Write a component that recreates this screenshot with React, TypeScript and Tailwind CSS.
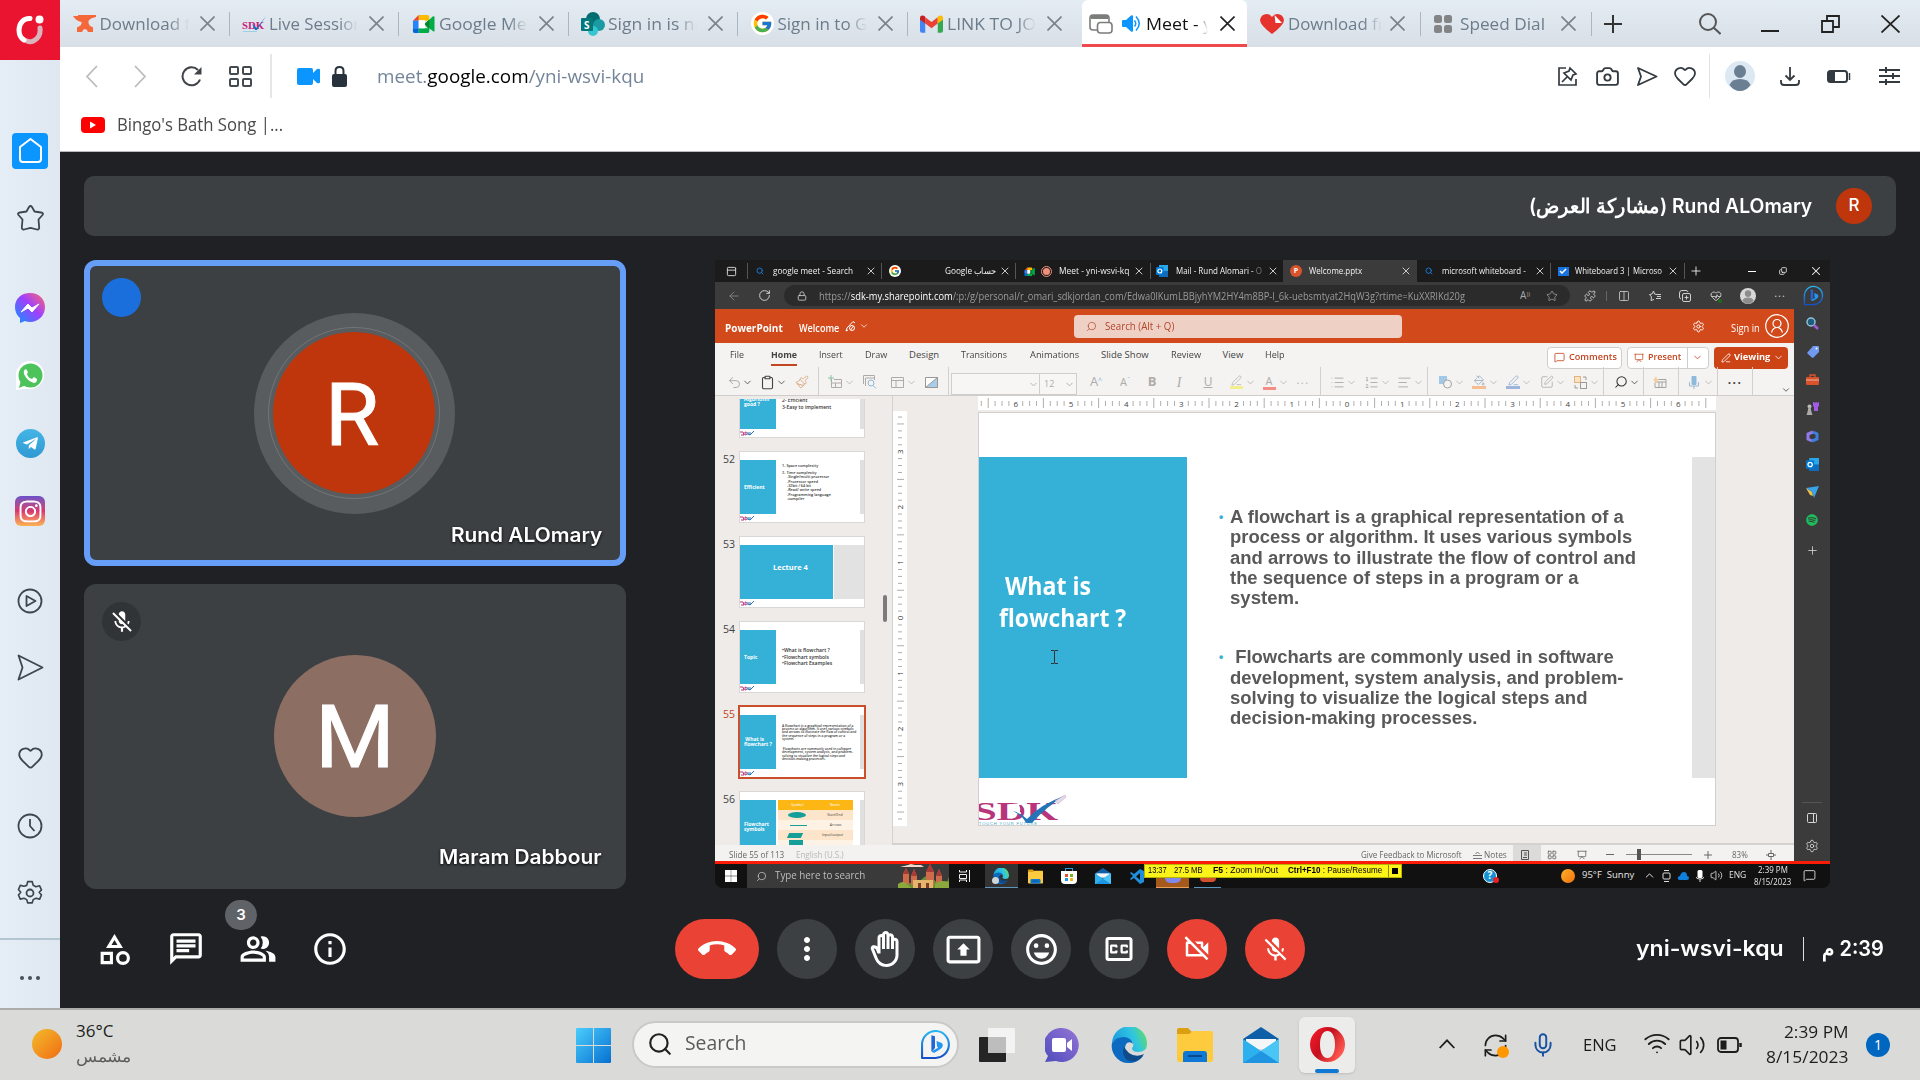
import React, { useLayoutEffect, useRef, useState } from "react";
import { ArrowLeft, Camera, ChevronDown, ChevronUp, Clipboard, Columns2, Copy, Heart, Lock, MessageSquare, Mic, Paintbrush, PanelRight, Plus, Presentation, Puzzle, RefreshCw, RotateCw, Search, Settings, Star, Undo2, Volume2, Wifi, X, PanelLeft, LayoutGrid, HeartPulse, PenLine, PaintBucket, SquarePen, List, ListOrdered, TextAlignStart } from "lucide-react";
import { MdCallEnd, MdMoreVert, MdOutlineBackHand, MdOutlinePresentToAll, MdOutlineEmojiEmotions, MdOutlineClosedCaption, MdOutlineVideocamOff, MdMicOff, MdOutlineCategory, MdOutlineChat, MdOutlinePeopleAlt, MdInfoOutline } from "react-icons/md";
import { FcGoogle } from "react-icons/fc";
import { FaTelegramPlane, FaInstagram, FaSpotify } from "react-icons/fa";

type Item = { at: number; node: React.ReactNode; start?: boolean };

/* Lays items along one axis; each one is centred on (or starts at) its stop. */
function Track({ items, vertical = false, className = "" }: { items: Item[]; vertical?: boolean; className?: string }) {
  let prev = 0;
  return (
    <div className={(vertical ? "flex flex-col items-center " : "flex items-center ") + className}>
      {items.map((it, i) => {
        const gap = it.at - prev;
        prev = it.at;
        const cls = vertical ? "flex h-0 shrink-0 items-center" : it.start ? "flex w-0 shrink-0 items-center justify-start" : "flex w-0 shrink-0 items-center justify-center";
        return (
          <div key={i} className={cls} style={vertical ? { marginTop: gap } : { marginLeft: gap }}>
            <div className="flex shrink-0 items-center">{it.node}</div>
          </div>
        );
      })}
    </div>
  );
}

/* Single line of text condensed or widened to a fixed measure. */
function Fit({ w, className = "", rtl = false, children }: { w: number; className?: string; rtl?: boolean; children: React.ReactNode }) {
  const ref = useRef<HTMLSpanElement>(null);
  const [k, setK] = useState(1);
  useLayoutEffect(() => {
    if (ref.current) setK(w / ref.current.offsetWidth);
  }, [w]);
  return (
    <span className="inline-block shrink-0 whitespace-nowrap text-left" style={{ width: w }}>
      <span ref={ref} dir={rtl ? "rtl" : "ltr"} className={"inline-block origin-left whitespace-pre " + className} style={{ transform: `scaleX(${k})` }}>
        {children}
      </span>
    </span>
  );
}

const c = (at: number, node: React.ReactNode): Item => ({ at, node });
const s = (at: number, node: React.ReactNode): Item => ({ at, node, start: true });

/* ---------- logos ---------- */
const MeetLogo = ({ size = 23 }: { size?: number }) => (
  <svg width={size} height={size} viewBox="0 0 24 24">
    <path d="M7 3h9q2 0 2 2v4H7z" fill="#ffba00" /><path d="M7 3v6H1z" fill="#ea4335" />
    <path d="M1 9h6v8H1z" fill="#2684fc" /><path d="M1 17h6v5H3q-2 0-2-2z" fill="#0066da" />
    <path d="M7 17h11v3q0 2-2 2H7z" fill="#00ac47" /><path d="M13 12.500 18 8l4-3.500q1.500-.5 1.500 1v14q0 1.500-1.500.5L18 17v2z" fill="#00ac47" />
    <path d="M13 12.500 18 8v9z" fill="#00832d" /><path d="M7 8.500h6.500v8.500H7z" fill="#fff" />
  </svg>
);
const GmailLogo = () => (
  <svg width="23" height="18" viewBox="0 0 24 18">
    <path d="M0 2v14q0 2 2 2h3.500V7z" fill="#4285f4" /><path d="M24 2v14q0 2-2 2h-3.500V7z" fill="#34a853" />
    <path d="M5.500 2 12 7l6.500-5v6.500L12 13.500 5.500 8.500z" fill="#ea4335" />
    <path d="M0 2.500Q0 0 2.500 0 4 0 5.500 1.500v7L0 4.500z" fill="#c5221f" /><path d="M24 2.500Q24 0 21.500 0 20 0 18.500 1.500v7l5.500-4z" fill="#fbbc04" />
  </svg>
);
const Anvil = () => (
  <svg width="23" height="17" viewBox="0 0 23 17"><path d="M0 1h5V0h18v2q-6 1-7.500 4-.5 2.500 1 4.500l3.500 2V17h-5q-1-3-3-3t-3 3H4v-4.500l3.500-2q1.500-2 1-3.500Q3 6 0 1z" fill="#f4683a" /></svg>
);
const SdkLogo = ({ big = false }: { big?: boolean }) =>
  big ? (
    <svg width="88" height="30" viewBox="0 0 88 30">
      <text x="-5" y="25" textLength="84" lengthAdjust="spacingAndGlyphs" className="fill-[#b8357b] font-['Liberation_Serif',serif] text-[25px] font-bold">SDK</text>
      <path d="M30 9h12v10H30z" fill="#fff" /><path d="M34 16q8 2 14 8Q62 9 85 1 67 12 53 28h-6q-3-7-13-12z" fill="#2375b8" />
      <path d="M42 10q4 3 2 9l-3-2q1-4-1-7z" fill="#b8357b" />
      <path d="M76 6 86 0l1 2-8 7z" fill="#e7d9e8" stroke="#b9a3c4" strokeWidth=".5" />
      <text x="0" y="29.500" textLength="58" className="fill-[#3aa3c9] font-['Liberation_Sans',sans-serif] text-[4px]">TOUCH YOUR FUTURE</text>
    </svg>
  ) : (
    <svg width="24" height="18" viewBox="0 0 24 18">
      <text x="0" y="14" textLength="22" lengthAdjust="spacingAndGlyphs" className="fill-[#c9207c] font-['Liberation_Serif',serif] text-[11px] font-bold">SDK</text>
      <path d="M10 9l5 4L24 1l-9 14h-2z" fill="#1c6fc4" /><path d="M1 16.500h14" stroke="#9bd0e6" />
    </svg>
  );
const SharePoint = () => (
  <svg width="24" height="24" viewBox="0 0 24 24"><circle cx="12" cy="7" r="7" fill="#036c70" /><circle cx="18" cy="13" r="6" fill="#1a9ba1" /><circle cx="12" cy="19" r="5" fill="#37c6d0" /><rect x="0" y="6" width="12" height="13" rx="1" fill="#03787c" /><text x="3" y="16.500" className="fill-white font-['Open_Sans',sans-serif] text-[10px] font-bold">S</text></svg>
);
const BingLogo = ({ size = 30 }: { size?: number }) => (
  <svg width={size} height={size} viewBox="0 0 30 30">
    <defs><linearGradient id="bg" x1="0" x2="0" y1="0" y2="1"><stop offset="0" stopColor="#27b5f2" /><stop offset="1" stopColor="#1450c8" /></linearGradient></defs>
    <path d="M2 28V14A13 13 0 1 1 15 28z" fill="none" stroke="url(#bg)" strokeWidth="2" strokeLinejoin="round" />
    <path d="M11 6l3.500 1v11.500l-3 3.500q-.5-.5-.5-1z" fill="#2463d8" /><path d="M16 11.500l4.500 1.800q2 1 1.500 3.200-.5 2-2.500 3L14 23q-2 0-2.500-1.500l6-3.300-1-1.200z" fill="#2196f3" />
  </svg>
);
const EdgeLogo = ({ size = 36 }: { size?: number }) => (
  <svg width={size} height={size} viewBox="0 0 36 36">
    <defs><linearGradient id="eg" x1="0" x2="1" y1="0.300" y2="0"><stop offset="0" stopColor="#1ca0e0" /><stop offset="0.550" stopColor="#31c6e0" /><stop offset="1" stopColor="#6be04a" /></linearGradient></defs>
    <path d="M1 16A17.500 17.500 0 0 1 36 17q0 8-9 8-6 0-6-4 2-2 1-5-2-5-9-5-8 0-12 5z" fill="url(#eg)" />
    <path d="M1 16q4-6 12-6 8 1 9 7-3-3-6-1-4 4 0 11 5 6 16 2-6 8-16 7A17 17 0 0 1 1 16z" fill="#0c6bc0" />
    <path d="M13 20q-3 7 3 13 8 4 15-3l2-3q-8 4-15-1-3-3-5-6z" fill="#114a8b" />
  </svg>
);
const FolderLogo = ({ size = 36 }: { size?: number }) => (
  <svg width={size} height={size} viewBox="0 0 36 34"><path d="M0 2q0-2 2-2h9l4 4v4H0z" fill="#dd9f12" /><path d="M0 6h12l4-3h18q2 0 2 2v27q0 2-2 2H2q-2 0-2-2z" fill="#fecb3e" /><path d="M6 34V26q0-3 3-3h18q3 0 3 3v8z" fill="#0f78d4" /><path d="M11 28h14" stroke="#0a4a8a" strokeWidth="2" /></svg>
);
const MailLogo = ({ size = 36 }: { size?: number }) => (
  <svg width={size} height={size} viewBox="0 0 36 36"><path d="M0 12 18 0l18 12v6H0z" fill="#0f5ea8" /><path d="M3 12h30v10H3z" fill="#f4f6f8" /><path d="M0 12l18 12L36 12v24H0z" fill="#2cb1ee" /><path d="M36 12 0 36h36z" fill="#49c5f6" /><path d="M18 24 36 36H0z" fill="#1f94e0" /></svg>
);
const WinLogo = ({ size = 35, color = "" }: { size?: number; color?: string }) => (
  <svg width={size} height={size} viewBox="0 0 35 35">
    <defs><linearGradient id="wg" x1="0" y1="0" x2="1" y2="1" gradientUnits="objectBoundingBox"><stop offset="0" stopColor="#4bcdfd" /><stop offset="1" stopColor="#0670d0" /></linearGradient></defs>
    <path d="M0 1q0-1 1-1h16v17H0zM18 0h16q1 0 1 1v16H18zM0 18h17v17H1q-1 0-1-1zM18 18h17v16q0 1-1 1H18z" fill={color || "url(#wg)"} />
  </svg>
);
const Person = ({ size = 30, bg = "#dce9f3", fg = "#6b7f92" }: { size?: number; bg?: string; fg?: string }) => (
  <svg width={size} height={size} viewBox="0 0 30 30"><circle cx="15" cy="15" r="15" fill={bg} /><ellipse cx="15" cy="10.500" rx="6" ry="6.500" fill={fg} /><path d="M4.500 24q2-6 10.500-6t10.500 6Q21 30 15 30T4.500 24z" fill={fg} /></svg>
);
const OperaLogo = () => (
  <svg width="35" height="35" viewBox="0 0 35 35"><defs><linearGradient id="og" x1="0" x2="1" y1="0" y2="0.600"><stop offset="0" stopColor="#ff1b2d" /><stop offset="0.500" stopColor="#c4101f" /><stop offset="1" stopColor="#ff5a50" /></linearGradient></defs><path fillRule="evenodd" d="M17.500 0a17.500 17.500 0 1 0 0 35 17.500 17.500 0 0 0 0-35zm0 4c5 0 7.500 6 7.500 13.500S22.500 31 17.500 31 10 25 10 17.500 12.500 4 17.500 4z" fill="url(#og)" /></svg>
);

/* ---------- browser chrome ---------- */
const tabX = (dark = false) => <svg width="15" height="15" viewBox="0 0 15 15" fill="none" strokeWidth="1.600" className={dark ? "stroke-[#222]" : "stroke-[#7b8187]"}><path d="M.5.5l14 14M14.500.5l-14 14" /></svg>;
const chromeTab = (base: number, icon: React.ReactNode, text: string, w: number): Item[] => [
  c(base + 24, icon),
  s(base + 39.5, <span className="block w-[89px] overflow-hidden [mask-image:linear-gradient(to_right,#000_78%,transparent)]"><Fit w={w}>{text}</Fit></span>),
  c(base + 147, tabX()),
];
const tabSep = (at: number) => c(at, <div className="h-6 w-px bg-[#a9b7c4]" />);

function TabBar() {
  return (
    <div className="flex h-[47px] bg-gradient-to-b from-[#e4ecf4] to-[#d8dfe6] text-[17px] text-[#6c7c8b]">
      <Track
        className="h-[47px] w-[1022px]"
        items={[
          ...chromeTab(0, <Anvil />, "Download fr", 98), tabSep(169),
          ...chromeTab(169.5, <SdkLogo />, "Live Session", 95), tabSep(338.5),
          ...chromeTab(339, <MeetLogo />, "Google Meet", 104), tabSep(508),
          ...chromeTab(508.5, <SharePoint />, "Sign in is not", 103), tabSep(677.5),
          ...chromeTab(678, <div className="rounded-full bg-white p-px"><FcGoogle size={21} /></div>, "Sign in to Go", 100), tabSep(847.5),
          ...chromeTab(847.5, <GmailLogo />, "LINK TO JOI", 94),
        ]}
      />
      <Track
        className="h-[47px] w-[165px] rounded-t-md border-b-[3px] border-[#ee4a4d] bg-white pt-[3px] text-[#111]"
        items={[
          c(19, <svg width="24" height="20" viewBox="0 0 24 20" fill="none" stroke="#7b7d7b" strokeWidth="1.600"><rect x="1" y="1" width="19" height="15" rx="3" fill="#fff" /><path d="M2 3h17" strokeWidth="4" /><rect x="8.500" y="8.500" width="14.500" height="10.500" rx="3" fill="#fff" /></svg>),
          c(49, <svg width="19" height="17" viewBox="0 0 19 17"><path d="M0 6q0-1 1-1h3l5-4.500q2-1 2 1v14q0 2-2 1L4 12H1q-1 0-1-1z" fill="#0a95ff" /><path d="M12.500 5.500q2.500 3 0 6M14 1.500q6.500 7 0 14" fill="none" stroke="#0a95ff" strokeWidth="1.500" /></svg>),
          s(64, <span className="block w-[62px] overflow-hidden [mask-image:linear-gradient(to_right,#000_80%,transparent)]"><Fit w={66}>Meet - y</Fit></span>),
          c(145, tabX(true)),
        ]}
      />
      <Track
        className="h-[47px] flex-1"
        items={[
          c(25, <svg width="24" height="20" viewBox="0 0 24 20"><path d="M12 20Q0 11 0 6 1 0 7 0q3 0 5 3 2-3 5-3 6 0 7 6 0 5-12 14z" fill="#e5322d" /><path d="M14.500 1 22 9h-6.500z" fill="#fff" /></svg>),
          s(41, <span className="block w-[94px] overflow-hidden [mask-image:linear-gradient(to_right,#000_80%,transparent)]"><Fit w={97}>Download fr</Fit></span>),
          c(150, tabX()), tabSep(173),
          c(196, <div className="grid grid-cols-2 gap-[2px]">{[0, 1, 2, 3].map((i) => <div key={i} className="size-2 rounded-[2.5px] bg-[#828486]" />)}</div>),
          s(213, <Fit w={85}>Speed Dial</Fit>), c(321, tabX()), tabSep(344),
          c(366, <svg width="18" height="18" viewBox="0 0 18 18" stroke="#333" strokeWidth="2"><path d="M0 9h18M9 0v18" /></svg>),
          c(463, <svg width="22" height="22" viewBox="0 0 22 22" fill="none" stroke="#555" strokeWidth="2"><circle cx="9" cy="9" r="8" /><path d="M14.500 14.500l7 6.500" /></svg>),
          c(523, <div className="mt-[14px] h-[2px] w-[18px] bg-[#222]" />),
          c(583, <svg width="19" height="18" viewBox="0 0 19 18" fill="none" stroke="#222" strokeWidth="1.800"><path d="M1 6h11v11H1zM6 6V1h12v11h-6" /></svg>),
          c(643, <svg width="19" height="18" viewBox="0 0 19 18" stroke="#222" strokeWidth="1.800"><path d="M.5.5l18 17M18.500.5l-18 17" /></svg>),
        ]}
      />
    </div>
  );
}

function AddressBar() {
  return (
    <div className="h-[104px] bg-white">
      <Track
        className="h-[58px] text-[#333a40]"
        items={[
          c(32, <svg width="12" height="23" viewBox="0 0 12 23" fill="none" stroke="#bcbcbc" strokeWidth="1.800"><path d="M11 1 1 11.500 11 22" /></svg>),
          c(80, <svg width="12" height="23" viewBox="0 0 12 23" fill="none" stroke="#bcbcbc" strokeWidth="1.800"><path d="M1 1l10 10.500L1 22" /></svg>),
          c(131, <svg width="21" height="21" viewBox="0 0 21 21"><path d="M19 13.500A9 9 0 1 1 17 4" fill="none" stroke="#404448" strokeWidth="2" /><path d="M20.500 1v7.500H13z" fill="#404448" /></svg>),
          c(180, <div className="grid grid-cols-2 gap-[3px]">{[0, 1, 2, 3].map((i) => <div key={i} className="h-[9px] w-[10px] rounded-[2px] border-2 border-[#444b50]" />)}</div>),
          c(211, <div className="h-11 w-[2px] bg-[#e6e6e6]" />),
          c(248, <svg width="23" height="17" viewBox="0 0 23 17" fill="#0a95ff"><rect width="16" height="17" rx="2" /><path d="M15 6l5-5q3-1 3 1v12q0 2-3 1l-5-5z" /></svg>),
          c(279, <svg width="15" height="21" viewBox="0 0 15 21"><rect y="8" width="15" height="13" rx="2" fill="#27323c" /><path d="M3.500 9V5q0-4 4-4t4 4v4" fill="none" stroke="#27323c" strokeWidth="2" /></svg>),
          s(316.5, <Fit w={267} className="text-[19px] text-[#74859a]">meet.<span className="text-black">google.com</span>/yni-wsvi-kqu</Fit>),
          c(1508, <svg width="20" height="20" viewBox="0 0 20 20" fill="none" stroke="#333a40" strokeWidth="1.700"><path d="M8 2H1v17h17v-6M4 16l5-5M12 2l6 6-3 1-2 5-7-7 5-2z" /></svg>),
          c(1547, <Camera size={25} strokeWidth={1.8} />),
          c(1587, <svg width="21" height="19" viewBox="0 0 21 19" fill="none" stroke="#333a40" strokeWidth="1.800" strokeLinejoin="round"><path d="M1 1l18.500 8.500L1 18l3-8.500z" /></svg>),
          c(1625, <Heart size={24} strokeWidth={1.8} />),
          c(1649, <div className="h-11 w-px bg-[#e3e3e3]" />),
          c(1680, <Person />),
          c(1730, <svg width="20" height="19" viewBox="0 0 20 19" fill="none" stroke="#333a40" strokeWidth="1.800"><path d="M10 0v13M5.500 8.500 10 13l4.500-4.500M1 13v2q0 3 3 3h12q3 0 3-3v-2" /></svg>),
          c(1779, <svg width="24" height="13" viewBox="0 0 24 13"><rect x="1" y="1" width="19" height="11" rx="2.500" fill="none" stroke="#333a40" strokeWidth="2" /><path d="M1 1h7v11H1z" fill="#333a40" /><path d="M22.500 3v7" stroke="#333a40" strokeWidth="1.500" /></svg>),
          c(1829, <svg width="21" height="18" viewBox="0 0 21 18" stroke="#333a40" strokeWidth="2"><path d="M0 3h21M0 9h21M0 15h21M7 0v6M14 6v6M7 12v6" /></svg>),
        ]}
      />
      <Track
        className="h-[40px]"
        items={[
          c(33, <div className="flex h-4 w-6 items-center justify-center rounded-[4px] bg-[#f00]"><svg width="6" height="8" viewBox="0 0 7 8"><path d="M0 0l7 4-7 4z" fill="#fff" /></svg></div>),
          s(57, <span className="-mt-px flex"><Fit w={166} className="text-[18px] text-[#4a4a4a]">{"Bingo's Bath Song |..."}</Fit></span>),
        ]}
      />
    </div>
  );
}

function SideBar() {
  const ic = "text-[#3c4650]";
  return (
    <div className="flex w-[60px] shrink-0 flex-col bg-gradient-to-r from-[#e5edf6] to-[#dfe8f1]">
      <div className="flex h-[60px] items-center justify-center bg-[#ea1430]">
        <svg width="30" height="30" viewBox="0 0 30 30" fill="none" strokeWidth="5" strokeLinecap="round"><path d="M25 13q1 8-5 12-4 3-8 1" stroke="#d9b4bc" /><path d="M15 3.500C9 3 4 8 4 15q0 7 5 10" stroke="#fff" /><circle cx="24.500" cy="4.500" r="2" fill="#fff" stroke="#fff" strokeWidth="4" /></svg>
      </div>
      <Track
        vertical
        className="h-[948px]"
        items={[
          c(90.5, <div className="flex size-9 items-center justify-center rounded bg-[#0a95ff]"><svg width="23" height="25" viewBox="0 0 23 25" fill="none" stroke="#fff" strokeWidth="2"><path d="M1 9 11.500 1 22 9v12q0 3-3 3H4q-3 0-3-3z" strokeLinejoin="round" /></svg></div>),
          c(158, <svg width="27" height="26" viewBox="0 0 27 26" fill="none" stroke="#3c4650" strokeWidth="1.800" strokeLinejoin="round"><path d="M12 2q1.500-2 3 0l2.500 4.500 6.500 1q3 .5 1.500 2.500l-4 4.500.7 8q0 2.300-2.200 2L13.500 22.800 7 24.500q-2.200.3-2.200-2l.7-8L1.500 10Q0 8 3 7.500l6.500-1z" /></svg>),
          c(248, <svg width="30" height="30" viewBox="0 0 30 30"><defs><linearGradient id="ms" x1="0" x2="1" y1="1" y2="0"><stop offset="0" stopColor="#0a95ff" /><stop offset="0.550" stopColor="#a040ff" /><stop offset="1" stopColor="#ff6a6a" /></linearGradient></defs><path d="M15 0C6 0 0 6 0 14q0 7 5 11v5l5-2q2 1 5 1c9 0 15-7 15-15S24 0 15 0z" fill="url(#ms)" /><path d="M6 19l7-8 4 4 7-4-7 8-4-4z" fill="#fff" stroke="#fff" /></svg>),
          c(316, <svg width="30" height="30" viewBox="0 0 30 30"><path d="M1 29V14A14 14 0 1 1 15 28H8z" fill="#fff" /><circle cx="15.500" cy="14.500" r="12" fill="#4dc35c" /><path d="M4 27l2-8 5 5z" fill="#4dc35c" /><path d="M11 8q-3 1-2 5 3 7 10 9 3 0 3-4l-3-2-2 2q-4-1-5-5l1-2z" fill="#fff" /></svg>),
          c(383, <div className="flex size-[29px] items-center justify-center rounded-full bg-gradient-to-b from-[#44b5e6] to-[#2f99d3] text-white"><FaTelegramPlane size={17} /></div>),
          c(451, <div className="flex size-[30px] items-center justify-center rounded-md bg-gradient-to-b from-[#6a4fc8] via-[#d9346f] to-[#fbb24c] text-white"><FaInstagram size={25} /></div>),
          c(541, <svg width="26" height="26" viewBox="0 0 26 26" fill="none" stroke="#3c4650" strokeWidth="1.800"><circle cx="13" cy="13" r="11.500" /><path d="M9.500 8v10l9-5z" strokeLinejoin="round" /></svg>),
          c(607.5, <svg width="27" height="27" viewBox="0 0 27 27" fill="none" stroke="#3c4650" strokeWidth="1.800" strokeLinejoin="round"><path d="M1.500 1.500 25.500 13.500l-24 12L5.500 13.500z" /></svg>),
          c(697, <Heart size={27} strokeWidth={1.6} className={ic} />),
          c(766, <svg width="26" height="26" viewBox="0 0 26 26" fill="none" stroke="#3c4650" strokeWidth="1.800"><circle cx="13" cy="13" r="11.500" /><path d="M13 6v7l4.500 5" /></svg>),
          c(833, <svg width="26" height="26" viewBox="0 0 26 26" fill="none" stroke="#3c4650" strokeWidth="1.800" strokeLinejoin="round"><path d="M10.500 1.500h5l1 4 3 1.500 4-1 2 4.500-2.500 2.500 2.500 3-2 4.500-4-1-3 1.500-1 3.500h-5l-1-3.500-3-1.500-4 1L.5 16 3 13 .5 10l2-4.500 4 1 3-1z" transform="translate(1 .3) scale(.92)" /><circle cx="13" cy="13" r="3.500" /></svg>),
          c(879, <div className="h-[2px] w-[60px] bg-[#b4c5d2]" />),
          c(918, <div className="flex gap-1">{[0, 1, 2].map((i) => <div key={i} className="size-1 rounded-full bg-[#454f59]" />)}</div>),
        ]}
      />
    </div>
  );
}

/* ---------- shared screen ---------- */
const DarkX = <X size={12} strokeWidth={1.8} className="text-[#ddd]" />;
const dSep = (at: number) => c(at, <div className="h-4 w-px bg-[#555]" />);
const LoupeBlue = <Search size={8} strokeWidth={3} className="text-[#1a78d0]" />;
const OutlookIcon = ({ size = 12 }: { size?: number }) => (
  <svg width={size} height={size} viewBox="0 0 12 12"><rect x="3" width="9" height="11" fill="#28a8ea" /><path d="M3 6l9 0v6H3z" fill="#0f6cbd" /><rect y="2" width="7.500" height="8" rx="1" fill="#0078d4" /><circle cx="3.800" cy="6" r="2" fill="none" stroke="#fff" strokeWidth="1.200" /></svg>
);

function SharedTabs() {
  return (
    <div className="flex h-[22px] bg-[#1b1b1b] text-[9px] text-[#f2f2f2]">
      <Track
        className="h-[22px] w-[568px]"
        items={[
          c(16, <PanelLeft size={11} className="rotate-90 text-[#ddd]" />), dSep(32),
          c(45, LoupeBlue), s(57.5, <Fit w={80}>google meet - Search</Fit>), c(156, DarkX), dSep(166),
          c(180, <div className="rounded-full bg-white p-px"><FcGoogle size={10} /></div>), s(230, <Fit w={52} className="text-[9px]">Google حساب</Fit>), c(290, DarkX), dSep(300),
          c(314, <MeetLogo size={11} />), c(331, <div className="flex size-[11px] items-center justify-center rounded-full border border-[#f0907c]"><div className="size-[7px] rounded-full bg-[#f0907c]" /></div>),
          s(344, <Fit w={70}>Meet - yni-wsvi-kq</Fit>), c(424, DarkX), dSep(435),
          c(447, <OutlookIcon />), s(460.5, <Fit w={86}>Mail - Rund Alomari - <span className="text-[#777]">O</span></Fit>), c(558, DarkX),
        ]}
      />
      <Track
        className="h-[22px] w-[134px] bg-[#3b3b3b]"
        items={[
          c(13, <div className="flex size-[12px] items-center justify-center rounded-full bg-[#d9532c] text-[7px] font-bold text-white">P</div>),
          s(26, <Fit w={53}>Welcome.pptx</Fit>), c(123, DarkX),
        ]}
      />
      <Track
        className="h-[22px] flex-1"
        items={[
          c(12, LoupeBlue), s(25, <Fit w={84}>microsoft whiteboard -</Fit>), c(123, DarkX), dSep(133),
          c(146, <div className="flex h-[9px] w-[11px] items-center justify-center bg-[#1873e0]"><svg width="8" height="6" viewBox="0 0 8 6"><path d="M1 3l2 2 4-4" stroke="#fff" fill="none" strokeWidth="1.500" /></svg></div>),
          s(158, <Fit w={87}>Whiteboard 3 | Microso</Fit>), c(256, DarkX), dSep(267), c(279, <Plus size={14} strokeWidth={1.5} />),
          c(335, <div className="h-px w-2 bg-white" />), c(366, <Copy size={8} strokeWidth={2.4} className="-scale-y-100" />), c(399, <X size={14} strokeWidth={1.8} />),
        ]}
      />
    </div>
  );
}

function SharedAddress() {
  return (
    <div className="flex h-[27px] items-center bg-[#3b3b3b] text-[#cfcfcf]">
      <Track className="w-[69px]" items={[c(19, <ArrowLeft size={14} strokeWidth={1.5} className="text-[#888]" />), c(49, <RotateCw size={13} strokeWidth={1.8} />)]} />
      <Track
        className="h-[21px] w-[786px] rounded-full bg-[#2b2b2b]"
        items={[
          c(18, <Lock size={10} strokeWidth={2} />),
          s(34.5, <span className="-mt-1 flex"><Fit w={646} className="text-[10px] text-[#9a9a9a]">https://<span className="text-white">sdk-my.sharepoint.com</span>/:p:/g/personal/r_omari_sdkjordan_com/Edwa0lKumLBBjyhYM2HY4m8BP-l_6k-uebsmtyat2HqW3g?rtime=KuXXRlKd20g</Fit></span>),
          c(741, <span className="text-[10px] text-[#aaa]">A<sup className="text-[6px]">))</sup></span>), c(768, <Star size={12} strokeWidth={1.5} className="text-[#aaa]" />),
        ]}
      />
      <Track
        items={[
          c(20, <Puzzle size={12} strokeWidth={1.8} />), c(36, <div className="h-[10px] w-px bg-[#666]" />), c(54, <Columns2 size={12} strokeWidth={1.6} />),
          c(85, <svg width="13" height="12" viewBox="0 0 13 12" fill="none" stroke="#cfcfcf"><path d="M8 4.500 5.500 4 4.500 1 3 4 .5 4.500 2.500 7 2 10.500l3-1M8 6.500h4M7 8.500h5M8 4.500h4" /></svg>),
          c(115, <svg width="12" height="12" viewBox="0 0 12 12" fill="none" stroke="#cfcfcf"><rect x="3.500" y="3.500" width="8" height="8" rx="1.500" /><path d="M2 9Q.5 8.500.5 7V3q0-2.500 2.500-2.500h4Q8.500.5 9 2M7.500 5.500v4M5.500 7.500h4" /></svg>),
          c(146, <div className="relative"><HeartPulse size={12} strokeWidth={1.8} /><div className="absolute bottom-[-1px] right-0 size-1 rounded-full bg-[#1b6e1b]" /></div>), c(178, <Person size={16} bg="#d8d8d8" fg="#8d8d8d" />),
          c(210, <span className="pb-1 text-[11px] tracking-[1px]">...</span>), c(243, <BingLogo size={21} />),
        ]}
      />
    </div>
  );
}

const chev = (at: number, dark = false) => c(at, <ChevronDown size={11} strokeWidth={1.8} className={dark ? "text-[#444]" : "text-[#b5b3b1]"} />);
const rSep = (at: number) => c(at, <div className="h-[31px] w-px bg-[#d2d0ce]" />);

function Ribbon() {
  const g = "text-[#aeaca9]";
  return (
    <div className="flex h-[53px] flex-col border-b border-[#cfcdcb] bg-[#f4f3f2] text-[9.5px] text-[#444]">
      <Track
        className="h-[25px]"
        items={[
          s(14.5, <Fit w={14}>File</Fit>),
          s(56, <span className="flex h-[21px] items-center border-b-2 border-[#c2451f] pt-0.5 font-bold"><Fit w={26}>Home</Fit></span>),
          s(104, <Fit w={24}>Insert</Fit>), s(150, <Fit w={22}>Draw</Fit>), s(194, <Fit w={30}>Design</Fit>), s(246, <Fit w={46}>Transitions</Fit>),
          s(315, <Fit w={49}>Animations</Fit>), s(386, <Fit w={48}>Slide Show</Fit>), s(455.5, <Fit w={30}>Review</Fit>), s(507.5, <Fit w={21}>View</Fit>), s(550, <Fit w={20}>Help</Fit>),
          s(832, <div className="mt-1 flex h-[22px] w-[75px] items-center gap-1 rounded-sm border border-[#d0cecc] bg-white pl-[6px] font-semibold text-[#c2451f]"><MessageSquare size={11} strokeWidth={1.8} /><span className="-mt-px flex"><Fit w={48}>Comments</Fit></span></div>),
          s(912, <div className="mt-1 flex h-[22px] w-[82px] items-center gap-1 rounded-sm border border-[#d0cecc] bg-white pl-[6px] font-semibold text-[#c2451f]"><Presentation size={10} strokeWidth={1.8} /><span className="-mt-px flex"><Fit w={33}>Present</Fit></span><div className="ml-[2px] h-full w-px bg-[#d0cecc]" /><ChevronDown size={11} strokeWidth={1.8} /></div>),
          s(999, <div className="mt-1 flex h-[22px] w-[74px] items-center gap-[3px] rounded-sm bg-[#cc4416] pl-[7px] font-bold text-white"><PenLine size={10} strokeWidth={2} /><span className="-mt-px flex"><Fit w={36}>Viewing</Fit></span><ChevronDown size={11} strokeWidth={1.8} /></div>),
        ]}
      />
      <Track
        className={"h-[28px] " + g}
        items={[
          c(19, <Undo2 size={15} strokeWidth={1.6} />), chev(32, true), c(52, <Clipboard size={15} strokeWidth={1.8} className="text-[#444]" />), chev(66, true),
          c(87, <Paintbrush size={14} strokeWidth={1.6} className="text-[#d8a77c]" />), rSep(103),
          c(120, <svg width="14" height="14" viewBox="0 0 14 14" fill="none" stroke="#aeaca9"><path d="M3.500 4v8.500h10v-8H6M3.500 8h10M7.500 8v4.500" /><path d="M3 0v6M0 3h6" stroke="#8cc0a0" /></svg>), chev(134),
          c(155, <svg width="14" height="14" viewBox="0 0 14 14" fill="none" stroke="#aeaca9"><path d="M.5 9V.5h11V5M2.500 11V3H12" /><circle cx="8" cy="8" r="3" stroke="#8fb8da" /><path d="M10 10.500l3 3" stroke="#8fb8da" /></svg>),
          c(182, <svg width="13" height="11" viewBox="0 0 13 11" fill="none" stroke="#aeaca9"><path d="M.5.5h12v10H.5zM.5 3.500h12M5 3.500v7" /></svg>), chev(196),
          c(216, <svg width="13" height="11" viewBox="0 0 13 11" stroke="#9a9896"><path d="M.5.5h12v10H.5z" fill="#fff" /><path d="M12.500.5v10H.5z" fill="#a8cdea" /></svg>), rSep(233),
          s(236, <div className="mt-1 flex h-[22px] w-[126px] border border-[#d0cecc] bg-[#f7f6f5] text-[9px]"><div className="flex w-[88px] items-center justify-end border-r border-[#d0cecc]"><ChevronDown size={11} /></div><div className="flex flex-1 items-center justify-between pl-1 pr-px">12<ChevronDown size={11} /></div></div>),
          c(381, <span className="text-[13px]">A<sup className="text-[7px] text-[#7fb3d8]">^</sup></span>), c(410, <span className="text-[11px]">A<sup className="text-[7px] text-[#7fb3d8]">ˇ</sup></span>),
          c(437, <b className="text-[13px]">B</b>), c(464, <i className="font-['Liberation_Serif',serif] text-[14px]">I</i>), c(493, <u className="text-[12px]">U</u>),
          c(521, <div className="flex flex-col items-center"><PenLine size={11} strokeWidth={1.5} /><div className="h-[3px] w-[13px] bg-[#f3ee8e]" /></div>), chev(535),
          c(554, <div className="flex flex-col items-center text-[11px] leading-[12px]">A<div className="h-[3px] w-[13px] bg-[#f58d86]" /></div>), chev(568),
          c(588, <span className="pb-1 text-[11px] tracking-[1.5px]">...</span>), rSep(605.5),
          c(622, <List size={15} strokeWidth={1.5} />), chev(636), c(656, <ListOrdered size={15} strokeWidth={1.5} />), chev(670), c(689, <TextAlignStart size={15} strokeWidth={1.5} />), chev(703), rSep(712),
          c(730, <svg width="13" height="13" viewBox="0 0 13 13"><rect width="8" height="8" fill="#a3c8e6" /><circle cx="8.500" cy="8" r="4" fill="#f4f3f2" stroke="#a3a3a3" /></svg>), chev(744),
          c(764, <div className="flex flex-col items-center"><PaintBucket size={11} strokeWidth={1.6} className="text-[#8ea6b8]" /><div className="h-[3px] w-[14px] bg-[#f6bd93]" /></div>), chev(778),
          c(798, <div className="flex flex-col items-center"><PenLine size={11} strokeWidth={1.6} className="text-[#85aacb]" /><div className="h-[3px] w-[14px] bg-[#9db4dc]" /></div>), chev(811),
          c(832, <SquarePen size={14} strokeWidth={1.4} />), chev(845),
          c(865, <svg width="13" height="13" viewBox="0 0 13 13" fill="none"><rect x=".5" y=".5" width="6" height="6" fill="#fbe3c2" stroke="#e4b27c" /><rect x="6.500" y="6.500" width="6" height="6" stroke="#9a9a9a" /><path d="M9 1h3v3M1 9v3h3" stroke="#9a9a9a" /></svg>), chev(879), rSep(888),
          c(906, <Search size={14} strokeWidth={1.8} className="-scale-x-100 text-[#333]" />), chev(919, true), rSep(928),
          c(945, <svg width="14" height="13" viewBox="0 0 14 13" fill="none" stroke="#a3a3a3"><path d="M3 3.500h10v8H2v-5M2 6h11M6 6v5M9 6v5" /><path d="M3 0 0 5h3l-1 4 4-6H4z" fill="#f4cf9c" stroke="none" /></svg>), rSep(963),
          c(979, <svg width="10" height="13" viewBox="0 0 10 13"><rect x="2.500" width="5" height="9" rx="1" fill="#8db9dd" /><path d="M.5 6v4h9V6M5 10v3" fill="none" stroke="#9fb7ca" /></svg>), chev(993), rSep(1002.5),
          c(1020, <span className="pb-1 text-[12px] font-bold tracking-[1.5px] text-[#444]">...</span>), rSep(1037), c(1071, <ChevronDown size={10} strokeWidth={1.8} className="mt-4 text-[#333]" />),
        ]}
      />
    </div>
  );
}

function Thumb({ n, title, lines, selected, wide, table, size = "text-[3.8px] leading-[4.3px]" }: { n: number; title: string; lines?: string[]; selected?: boolean; wide?: boolean; table?: boolean; size?: string }) {
  return (
    <div className="flex h-[85px] shrink-0">
      <div className={"w-[20px] shrink-0 text-right text-[10.5px] leading-[14px] " + (selected ? "text-[#c2451f]" : "text-[#444]")}>{n}</div>
      <div className={"ml-[5px] flex h-[70px] w-[124px] flex-col bg-white " + (selected ? "outline-2 outline-[#c9502a]" : "outline outline-[#dad8d6]")}>
        <div className="mt-2 flex h-[54px]">
          <div className={"flex shrink-0 flex-col justify-center whitespace-pre bg-[#35b0d6] font-bold text-white " + (wide ? "w-[93px] items-center pb-[10px] pl-2 text-[7.5px] leading-[8px]" : "w-[36px] pl-1 text-[5px] leading-[5px]")}>{title}</div>
          {table ? (
            <div className="ml-[2px] flex w-[75px] flex-col text-[3.5px] leading-[4px] text-[#444]">
              <div className="flex h-[10px] items-center justify-around bg-[#fdb714] text-white"><span>Symbol</span><span>Name</span></div>
              <div className="flex h-[10px] items-center justify-around bg-[#fde5cb]"><div className="h-[6px] w-[18px] rounded-[50%] bg-[#14a098]" /><span>Start/End</span></div>
              <div className="flex h-[10px] items-center justify-around bg-[#fef2e5]"><div className="h-px w-[17px] bg-[#14a098]" /><span>Arrows</span></div>
              <div className="flex h-[10px] items-center justify-around bg-[#fde5cb]"><div className="h-[5px] w-[14px] -skew-x-[25deg] bg-[#14a098]" /><span>Input/output</span></div>
              <div className="flex h-[10px] items-start justify-around bg-[#fef2e5]"><div className="h-[6px] w-[14px] bg-[#14a098]" /><span className="w-4" /></div>
            </div>
          ) : wide ? null : (
            <div className={"ml-[6px] flex w-[76px] flex-col justify-center whitespace-pre font-semibold text-[#333] " + size}>{lines?.map((l, i) => <div key={i} className="min-h-[3px]">{l}</div>)}</div>
          )}
          <div className={wide ? "ml-px flex-1 bg-[#e2e2e2]" : "ml-auto w-[4px] bg-[#e0e0e0]"} />
        </div>
        <svg width="14" height="5" viewBox="0 0 14 5" className="mt-[2px]" fill="none"><path d="M0 1h3l1 3H1M5 4V1q2 0 2 1.500T5 4" stroke="#b8357b" /><path d="M8 1v3M10 1v3M8 3l2 1 4-4" stroke="#2375b8" /></svg>
      </div>
    </div>
  );
}

const body1 = ["A flowchart is a graphical representation of a", "process or algorithm. It uses various symbols", "and arrows to illustrate the flow of control and", "the sequence of steps in a program or a", "system."];
const body2 = [" Flowcharts are commonly used in software", "development, system analysis, and problem-", "solving to visualize the logical steps and", "decision-making processes."];

function ThumbList() {
  return (
    <div className="flex h-[449px] w-[177px] shrink-0 flex-col pt-[3px]">
      <div className="flex h-[446px] flex-row overflow-hidden">
        <div className="-mt-[32px] flex flex-col">
          <Thumb n={51} title={"\nAlgorithm\ngood ?\n\n"} lines={["", "", "2- Efficient", "3-Easy to implement", ""]} size="text-[5px] leading-[6.5px]" />
          <Thumb n={52} title="Efficient" lines={["1- Space complexity", "", "2- Time complexity", "     -Single/multi processor", "     -Processor speed", "     -32bit / 64 bit", "     -Read/ write speed", "     -Programming language", "     -compiler", "", "", ""]} />
          <Thumb n={53} title="Lecture 4" wide />
          <Thumb n={54} title="Topic" lines={["•What is flowchart ?", "•Flowchart symbols", "•Flowchart Examples"]} size="text-[5px] leading-[6.8px]" />
          <Thumb n={55} title={" What is\nflowchart ?"} lines={[...body1, "", "", ...body2]} selected size="text-[3.3px] leading-[3.4px]" />
          <Thumb n={56} title={"Flowchart\nsymbols"} table />
        </div>
        <div className="ml-[19px] mt-[196px] h-[27px] w-[4px] rounded bg-[#7d7b79]" />
      </div>
    </div>
  );
}

function HRuler() {
  return (
    <svg width="738" height="14" className="block bg-white">
      {Array.from({ length: 106 }, (_, i) => i - 53).map((i) => {
        const x = 369 + i * 6.9;
        if (x < 2 || x > 736) return null;
        return i % 8 === 0 ? (
          <text key={i} x={x} y="11" textAnchor="middle" className="fill-[#444] font-['Open_Sans',sans-serif] text-[8px]">{Math.abs(i / 8)}</text>
        ) : (
          <path key={i} d={i % 4 === 0 ? `M${x} 2v10` : `M${x} 5v5`} stroke="#b0aeac" />
        );
      })}
    </svg>
  );
}
function VRuler() {
  return (
    <svg width="14" height="415" className="mt-[15px] block bg-white">
      {Array.from({ length: 60 }, (_, i) => i - 30).map((i) => {
        const y = 207 + i * 6.93;
        if (y < 3 || y > 412) return null;
        return i % 8 === 0 ? (
          <text key={i} transform={`translate(10 ${y}) rotate(-90)`} textAnchor="middle" className="fill-[#333] font-['Open_Sans',sans-serif] text-[8px]">{Math.abs(i / 8)}</text>
        ) : (
          <path key={i} d={i % 4 === 0 ? `M4 ${y}h7` : `M5 ${y}h4`} stroke="#b0aeac" />
        );
      })}
    </svg>
  );
}

const widths1 = [394, 402, 406, 349, 69];
const widths2 = [384, 393, 357, 247];

function Slide() {
  return (
    <div className="flex h-[414px] w-[738px] flex-col border border-[#d2d0ce] bg-white">
      <div className="mt-[44px] flex h-[322px]">
        <div className="flex w-[208px] flex-col bg-[#35b0d6] pt-[112px] text-[25px] font-bold leading-[32px] text-white">
          <div className="pl-[26px]"><Fit w={86}>What is</Fit></div>
          <div className="pl-[20px]"><Fit w={127}>flowchart ?</Fit></div>
          <svg width="7" height="14" viewBox="0 0 7 14" className="ml-[72px] mt-[17px]" fill="none" stroke="#333"><path d="M0 .5h3l.5 1 .5-1h3M3.500 1v12M0 13.500h3l.5-1 .5 1h3" /></svg>
        </div>
        <div className="flex flex-1 flex-col pl-[32px] pt-[50px] font-['Liberation_Sans',Arial,sans-serif] text-[17.5px] font-bold leading-[20.3px] text-[#595959]">
          {body1.map((l, i) => (
            <div key={l} className="flex h-[20.3px] items-center"><span className="w-[11px] text-[12px] text-[#35b0d6]">{i === 0 ? "•" : ""}</span><Fit w={widths1[i]}>{l}</Fit></div>
          ))}
          <div className="h-[39px]" />
          {body2.map((l, i) => (
            <div key={l} className="flex h-[20.3px] items-center"><span className="w-[11px] text-[12px] text-[#35b0d6]">{i === 0 ? "•" : ""}</span><Fit w={widths2[i]}>{l}</Fit></div>
          ))}
        </div>
        <div className="w-[23px] bg-[#e3e3e3]" />
      </div>
      <div className="mt-[17px]"><SdkLogo big /></div>
    </div>
  );
}

function StatusBar() {
  return (
    <Track
      className="h-[16px] bg-[#f3f2f1] pt-[3px] text-[9px] text-[#666]"
      items={[
        s(13.5, <Fit w={55}>Slide 55 of 113</Fit>), s(81, <Fit w={48} className="text-[#b8b6b4]">English (U.S.)</Fit>), s(646, <Fit w={101}>Give Feedback to Microsoft</Fit>),
        c(762.5, <svg width="9" height="8" viewBox="0 0 9 8" stroke="#777" fill="none"><path d="M0 4.500h9M0 7.500h9M2.500 3l2-2 2 2" /></svg>), s(769, <Fit w={23}>Notes</Fit>),
        c(812, <div className="-mt-[3px] flex h-4 w-7 items-center justify-center bg-[#dddbd9]"><svg width="8" height="10" viewBox="0 0 8 10" className="mr-1 mt-[3px]" fill="none" stroke="#555"><path d="M.5.5h7v9h-7zM3 3h3M3 5h3M2 7.500h4" /></svg></div>),
        c(837, <LayoutGrid size={10} />), c(867, <Presentation size={10} />), c(895, <div className="h-px w-2 bg-[#666]" />),
        s(911, <div className="h-px w-[66px] bg-[#888]" />), c(924, <div className="h-[11px] w-1 bg-[#555]" />), c(993, <Plus size={12} />), s(1017, <Fit w={16}>83%</Fit>),
        c(1056, <svg width="10" height="10" viewBox="0 0 10 10" stroke="#666" fill="none"><path d="M2.500 3.500h5v3h-5zM5 0v3M5 7v3M0 5h2M8 5h2" /></svg>),
      ]}
    />
  );
}

function EdgeRail() {
  return (
    <Track
      vertical
      className="w-[36px] shrink-0 bg-[#3b3b3b] text-[#d5d5d5]"
      items={[
        c(14.5, <svg width="13" height="13" viewBox="0 0 13 13" fill="none"><circle cx="5" cy="5" r="4" fill="#1f5d7d" stroke="#8fc3dd" strokeWidth="1.500" /><path d="M8 8l4 4" stroke="#a35ad8" strokeWidth="2.500" /></svg>),
        c(43, <svg width="13" height="12" viewBox="0 0 13 12"><path d="M7 0h5q1 0 1 1v5l-6 6q-1 0-6-5z" fill="#6f9af0" /><circle cx="10.500" cy="2.500" r="1" fill="#fff" /></svg>),
        c(71, <svg width="13" height="12" viewBox="0 0 13 12"><path d="M4 3V1h5v2" fill="none" stroke="#e2542b" strokeWidth="1.300" /><rect y="3" width="13" height="8" rx="1" fill="#d8522c" /><path d="M0 6h13" stroke="#f2b29c" /></svg>),
        c(99, <svg width="13" height="13" viewBox="0 0 13 13"><circle cx="3.500" cy="4.500" r="2" fill="#bbb" /><path d="M2.500 5h2l1 5 1 3H.5l1-3z" fill="#aaa" /><path d="M7 0h1.500v1h1V0H11v1h1V0h1v4l-1 1v4H8V5L7 4z" fill="#a15be8" /></svg>),
        c(127, <svg width="13" height="13" viewBox="0 0 13 13" fill="none" strokeWidth="3"><path d="M7 2 2 4v5l4 2" stroke="#8f7ae8" /><path d="M7 2l4 2v5l-5 2" stroke="#3c7fe0" /></svg>),
        c(155, <OutlookIcon size={13} />),
        c(183, <svg width="13" height="12" viewBox="0 0 13 12"><path d="M0 2 13 0 8 12 6 6z" fill="#38a3e8" /><path d="M0 2l6 4 1 4-3-1z" fill="#f0c040" /></svg>),
        c(211, <FaSpotify size={12} className="text-[#1ebd5b]" />), c(241.500, <Plus size={13} strokeWidth={1.5} />), c(493, <div className="h-px w-5 bg-[#555]" />),
        c(508.500, <PanelRight size={12} strokeWidth={2} />), c(536.500, <Settings size={14} strokeWidth={1.5} />),
      ]}
    />
  );
}

function SharedTaskbar() {
  return (
    <div className="flex h-[24px] bg-[#111]">
      <Track
        className="h-[24px] w-[429px] text-white"
        items={[
          c(16, <WinLogo size={12} color="#fff" />),
          s(32, <div className="flex h-[24px] w-[202px] items-center bg-[#3a3a3a] pl-[9px]"><Search size={11} strokeWidth={1.6} className="-scale-x-100 text-[#ccc]" /><span className="-mt-px ml-2 flex text-[11px] text-[#bdbdbd]"><Fit w={90}>Type here to search</Fit></span>
            <svg width="51" height="24" viewBox="0 0 51 24" className="ml-auto"><path d="M0 24q6-8 12-5t12-4 14 3 13-5v11z" fill="#6c8f35" /><path d="M5 10l3-6 3 6v10H5zM13 12l3-7 3 7v9h-6zM28 8l4-8 4 8v14h-8zM38 12l3-7 3 7v9h-6z" fill="#cf6a4a" /><path d="M5 10l3-6 3 6zM28 8l4-8 4 8zM38 12l3-7 3 7zM13 12l3-7 3 7z" fill="#a83b35" /><path d="M15 16h20v8H15z" fill="#e3b46b" /><path d="M20 24v-5h3v5zM28 24v-5h3v5z" fill="#7d3c2a" /><path d="M0 20q5-4 9 0t5 4H0zM37 20q5-5 14-2v6H37z" fill="#8aa83c" /><path d="M2 3h24l-3-2h-6l-4-1-3 1z" fill="#f2d8c8" /></svg></div>),
          c(250, <svg width="12" height="12" viewBox="0 0 12 12" fill="none" stroke="#eee"><path d="M.5 0v2h7V0M.5 4.500h7v4h-7zM.5 12v-2h7v2M10.500 0v12" /></svg>),
          c(286, <div className="flex h-[24px] w-[33px] items-center justify-center border-b border-[#5b96bd] bg-[#333]"><div className="relative"><EdgeLogo size={16} /><div className="absolute -left-px bottom-0 size-[7px] rounded-full bg-[#cfd6da]" /></div></div>),
          c(320.5, <FolderLogo size={15} />),
          c(354, <div className="flex flex-col items-center"><div className="h-[3px] w-2 border border-b-0 border-[#2d9be0]" /><div className="grid h-[13px] w-4 grid-cols-2 place-content-center gap-px rounded-b-sm bg-white px-[4px]"><i className="size-[3px] bg-[#e8502d]" /><i className="size-[3px] bg-[#7ab51d]" /><i className="size-[3px] bg-[#1c9ae0]" /><i className="size-[3px] bg-[#f5b81d]" /></div></div>),
          c(388, <MailLogo size={16} />), c(422, <svg width="14" height="15" viewBox="0 0 14 15"><path d="M10 0l4 2v11l-4 2-6-6-3 2-1-1 3-3-3-3 1-1 3 2zM10 4 6 7.500 10 11z" fill="#1f8fdc" fillRule="evenodd" /></svg>),
        ]}
      />
      <div className="flex w-[258px] flex-col">
        <Track
          className="h-[14px] border border-[#b8b400] bg-[#fbf31a] font-['Liberation_Sans',sans-serif] text-[9px] text-black"
          items={[s(3, <Fit w={19}>13:37</Fit>), s(29, <Fit w={29}>27.5 MB</Fit>), s(68, <Fit w={65}><b>F5</b> : Zoom In/Out</Fit>), s(143, <Fit w={94}><b>Ctrl+F10</b> : Pause/Resume</Fit>), c(243, <div className="h-3 w-px bg-[#8f8b00]" />), c(250, <div className="size-[6px] bg-black" />)]}
        />
        <div className="flex h-[10px] pl-[12px]">
          <div className="flex w-[33px] justify-center border-b border-[#e8a15c] bg-[#a55a1c]"><div className="h-[5px] w-4 rounded-b-full bg-[#8288e8]" /></div>
          <div className="ml-[5px] flex w-[27px] justify-center border-b border-[#5b96bd]"><div className="h-[4px] w-4 rounded-b-full bg-[#d0512b]" /></div>
        </div>
      </div>
      <Track
        className="h-[24px] flex-1 pb-px text-[9.5px] text-[#e6e6e6]"
        items={[
          c(88, <div className="flex size-[14px] items-center justify-center rounded-full border border-white bg-[#1492d4] text-[10px] font-bold text-white">?</div>), c(94, <div className="mt-2 size-[6px] rounded-full bg-[#e8202a]" />),
          c(166, <div className="size-[14px] rounded-full bg-gradient-to-br from-[#fdb02a] to-[#f1720e]" />), s(180, <Fit w={52}>{"95°F  Sunny"}</Fit>),
          c(247.5, <ChevronUp size={13} strokeWidth={1.8} />), c(264, <svg width="9" height="12" viewBox="0 0 9 12" fill="none" stroke="#ddd"><rect x="1" y="3" width="7" height="6" rx="1" /><path d="M2 .5h5M2 11.500h5" /></svg>),
          c(281, <svg width="12" height="8" viewBox="0 0 12 8"><path d="M2 8Q0 7 1 5q1-1 2-1 1-4 4-4t3 4q2 0 2 2t-2 2z" fill="#0f7fdb" /></svg>),
          c(297.5, <svg width="8" height="12" viewBox="0 0 8 12"><rect x="1.500" width="5" height="8" rx="1.500" fill="#fff" /><path d="M0 7q0 2 4 2t4-2M4 9v3" stroke="#ddd" fill="none" /></svg>),
          c(314, <Volume2 size={13} strokeWidth={1.5} />), s(327, <Fit w={17}>ENG</Fit>),
          s(352, <div className="flex w-[37px] flex-col items-center text-[8.5px] leading-[12px]"><Fit w={30}>2:39 PM</Fit><Fit w={37}>8/15/2023</Fit></div>),
          c(407, <MessageSquare size={13} strokeWidth={1.6} />),
        ]}
      />
    </div>
  );
}

function SharedScreen() {
  return (
    <div className="flex h-[628px] w-[1115px] flex-col overflow-hidden rounded-b-lg bg-[#1b1b1b]">
      <SharedTabs />
      <SharedAddress />
      <div className="flex h-[552px]">
        <div className="flex w-[1079px] flex-col">
          <Track
            className="h-[34px] bg-[#d24a1b] text-white"
            items={[
              s(10, <Fit w={58} className="text-[11px] font-bold">PowerPoint</Fit>), s(83.5, <Fit w={40} className="text-[10px] font-semibold">Welcome</Fit>),
              c(135, <svg width="11" height="12" viewBox="0 0 11 12" fill="none" stroke="#fff"><path d="M1 11 2 8l6-6.500 2 1.500M1 11l2-1" /><circle cx="7" cy="8" r="2.500" /><path d="M5.500 10l3-4" /></svg>), c(149, <ChevronDown size={10} strokeWidth={1.8} />),
              s(359, <div className="flex h-[23px] w-[328px] items-center rounded-sm bg-[#efd0c5] pl-[12px] text-[10px] text-[#b2452a]"><Search size={11} strokeWidth={1.5} className="mr-[8px] -scale-x-100" /><Fit w={69}>Search (Alt + Q)</Fit></div>),
              c(983, <Settings size={13} strokeWidth={1.8} />), s(1016, <Fit w={29} className="text-[10px]">Sign in</Fit>),
              c(1062, <svg width="24" height="24" viewBox="0 0 24 24" fill="none" stroke="#fff" strokeWidth="1.200"><circle cx="12" cy="12" r="11.300" /><circle cx="12" cy="9.500" r="4" /><path d="M6.500 18.500Q8 13.500 12 13.500t5.500 5" /></svg>),
            ]}
          />
          <Ribbon />
          <div className="flex h-[449px] bg-[#eeebe9]">
            <ThumbList />
            <div className="flex w-[902px] border-b-2 border-l border-[#d4d1ce]">
              <VRuler />
              <div className="ml-[71px] flex flex-col gap-[2px]">
                <HRuler />
                <Slide />
              </div>
            </div>
          </div>
          <StatusBar />
        </div>
        <EdgeRail />
      </div>
      <div className="h-[3px] shrink-0 bg-[#fb1c05]" />
      <SharedTaskbar />
    </div>
  );
}

/* ---------- meeting ---------- */
const round = "flex h-[60px] items-center justify-center rounded-full text-white";

function Meeting() {
  return (
    <div className="flex h-[857px] flex-col border-t border-[#b9bbc0] bg-[#202124] pl-6 font-['Inter',sans-serif] text-white">
      <div className="mt-[24px] flex h-[60px] w-[1812px] items-center justify-end gap-[24px] rounded-[10px] bg-[#3c4043] pr-[24px]">
        <Fit w={283} rtl className="text-[20px] font-semibold">Rund ALOmary (مشاركة العرض)</Fit>
        <div className="flex size-9 items-center justify-center rounded-full bg-[#bf360c] text-[17px] font-medium">R</div>
      </div>
      <div className="mt-6 flex">
        <div className="flex w-[542px] flex-col gap-[18px]">
          <div className="relative flex h-[306px] items-center justify-center rounded-[12px] border-[6px] border-[#669df6] bg-[#3c4043]">
            <div className="absolute left-3 top-3 size-[39px] rounded-full bg-[#1b6fdc]" />
            <div className="mr-[2px] flex size-[201px] items-center justify-center rounded-full bg-[#585c5f]">
              <div className="flex size-[172px] items-center justify-center rounded-full border border-[#727679]">
                <div className="flex size-[162px] items-center justify-center rounded-full bg-[#bf360c] pr-1 pt-[3px] font-['Roboto',sans-serif] text-[88px] [-webkit-text-stroke:1px_#fff]">R</div>
              </div>
            </div>
            <div className="absolute bottom-[10px] right-[18px] flex [text-shadow:0_1px_3px_#000]"><Fit w={151} className="text-[20px] font-semibold">Rund ALOmary</Fit></div>
          </div>
          <div className="relative flex h-[305px] items-center justify-center rounded-[12px] bg-[#3c4043]">
            <div className="absolute left-[18px] top-[18px] flex size-[39px] items-center justify-center rounded-full bg-[#313437]"><MdMicOff size={26} /></div>
            <div className="mb-[2px] mr-[1px] flex size-[162px] items-center justify-center rounded-full bg-[#8d6e63] pt-[3px] font-['Roboto',sans-serif] text-[88px] [-webkit-text-stroke:1px_#fff]"><Fit w={80}>M</Fit></div>
            <div className="absolute bottom-[17px] right-[25px] flex [text-shadow:0_1px_3px_#000]"><Fit w={162} className="text-[20px] font-semibold">Maram Dabbour</Fit></div>
          </div>
        </div>
        <div className="ml-[89px] font-['Open_Sans',sans-serif]"><SharedScreen /></div>
      </div>
      <div className="mt-[30px] flex h-[60px] items-center">
        <Track
          className="h-[60px] w-[591px]"
          items={[
            c(30.5, <MdOutlineCategory size={37} />), c(102, <MdOutlineChat size={38} />),
            c(174, <div className="relative"><MdOutlinePeopleAlt size={38} /><div className="absolute -top-[30px] left-[-14px] flex h-[30px] w-8 items-center justify-center rounded-full bg-[#5f6368] text-[15px] font-semibold">3</div></div>),
            c(246, <MdInfoOutline size={38} />),
          ]}
        />
        <div className="flex gap-[18px]">
          <div className={round + " w-[84px] bg-[#ea4335]"}><MdCallEnd size={38} /></div>
          <div className={round + " w-[60px] bg-[#3c4043]"}><MdMoreVert size={36} /></div>
          <div className={round + " w-[60px] bg-[#3c4043]"}><MdOutlineBackHand size={36} /></div>
          <div className={round + " w-[60px] bg-[#3c4043]"}><MdOutlinePresentToAll size={37} /></div>
          <div className={round + " w-[60px] bg-[#3c4043]"}><MdOutlineEmojiEmotions size={37} /></div>
          <div className={round + " w-[60px] bg-[#3c4043]"}><MdOutlineClosedCaption size={36} /></div>
          <div className={round + " w-[60px] bg-[#ea4335]"}><MdOutlineVideocamOff size={30} /></div>
          <div className={round + " w-[60px] bg-[#ea4335]"}><MdMicOff size={29} /></div>
        </div>
        <div className="ml-[331px] flex items-center text-[21px] font-semibold">
          <Fit w={148}>yni-wsvi-kqu</Fit>
          <div className="ml-[19px] mr-[18px] h-6 w-px bg-[#ddd]" />
          <Fit w={62} rtl>2:39 م</Fit>
        </div>
      </div>
    </div>
  );
}

/* ---------- taskbar ---------- */
function Taskbar() {
  return (
    <Track
      className="h-[72px] border-t-2 border-[#adadad] bg-[#dadbd9] text-[#1d1d1d]"
      items={[
        c(47, <div className="mb-[2px] size-[30px] rounded-full bg-gradient-to-br from-[#f0bb2b] to-[#f06a12]" />),
        s(76, <div className="-mt-[3px] flex flex-col leading-[25px]"><Fit w={37} className="text-[17px]">36°C</Fit><Fit w={56} rtl className="text-[16px] text-[#5c5c5c]">مشمس</Fit></div>),
        c(593.5, <WinLogo />),
        s(632, <div className="-mt-[2px] flex h-[47px] w-[327px] items-center rounded-full border-2 border-[#c9c9c9] bg-[#f4f4f3] pl-[13px] pr-[6px]"><Search size={26} strokeWidth={2} className="text-[#222]" /><span className="-mt-[2px] ml-[12px] flex text-[20px] text-[#5a5a5a]"><Fit w={61}>Search</Fit></span><span className="ml-auto"><BingLogo size={31} /></span></div>),
        c(997, <svg width="36" height="34" viewBox="0 0 36 34"><rect y="9" width="27" height="25" rx="1" fill="#252525" /><rect x="9" width="27" height="25" rx="1" fill="#f3f3f3" /><path d="M9 9h18v16H9z" fill="#bdbdbd" /></svg>),
        c(1062, <svg width="34" height="34" viewBox="0 0 34 34"><defs><linearGradient id="tc" x1="0" x2="1" y1="1" y2="0"><stop offset="0" stopColor="#4e4bbd" /><stop offset="1" stopColor="#9576d6" /></linearGradient></defs><path d="M17 0a17 17 0 1 1-6 33L0 34l3-6A17 17 0 0 1 17 0z" fill="url(#tc)" /><rect x="7" y="10" width="14" height="14" rx="2" fill="#fff" /><path d="M22 15l5-4v12l-5-4z" fill="#fff" /></svg>),
        c(1129, <EdgeLogo />), c(1195, <FolderLogo />), c(1261, <MailLogo />),
        c(1327, <div className="flex h-14 w-14 flex-col items-center rounded-md bg-[#ececeb] pt-[10px] shadow-sm"><OperaLogo /><div className="mt-[7px] h-[4px] w-6 rounded-full bg-[#0f78d4]" /></div>),
        c(1447, <svg width="16" height="10" viewBox="0 0 16 10" fill="none" stroke="#1d1d1d" strokeWidth="1.800" className="mb-[2px]"><path d="M.7 9 8 1.300 15.300 9" /></svg>),
        c(1495, <div className="relative"><RefreshCw size={27} strokeWidth={1.5} /><div className="absolute bottom-[1px] right-0 size-3 rounded-full bg-[#ff9800]" /></div>),
        c(1543, <Mic size={26} strokeWidth={1.8} className="text-[#1752a3]" />),
        s(1582.5, <span className="-mt-px flex"><Fit w={34} className="text-[17px]">ENG</Fit></span>), c(1657, <Wifi size={28} strokeWidth={1.6} className="mb-1" />), c(1692, <Volume2 size={28} strokeWidth={1.4} />),
        c(1729, <svg width="25" height="16" viewBox="0 0 25 16"><rect x="1" y="1" width="20" height="14" rx="3" fill="none" stroke="#1d1d1d" strokeWidth="1.800" /><rect x="3.500" y="3.500" width="6" height="9" fill="#1d1d1d" /><path d="M23.500 6v4" stroke="#1d1d1d" strokeWidth="2.500" /></svg>),
        s(1766, <div className="-mt-[3px] flex w-[83px] flex-col items-end text-[17px] leading-[25px]"><Fit w={65}>2:39 PM</Fit><Fit w={83}>8/15/2023</Fit></div>),
        c(1878, <div className="mb-px flex size-6 items-center justify-center rounded-full bg-[#0067c0] pb-px text-[14px] text-white">1</div>),
      ]}
    />
  );
}

export default function App() {
  return (
    <div className="flex h-[1080px] w-[1920px] flex-col overflow-hidden bg-white font-['Open_Sans','Noto_Sans',sans-serif]">
      <div className="flex h-[1008px]">
        <SideBar />
        <div className="flex w-[1860px] flex-col">
          <TabBar />
          <AddressBar />
          <Meeting />
        </div>
      </div>
      <Taskbar />
    </div>
  );
}
